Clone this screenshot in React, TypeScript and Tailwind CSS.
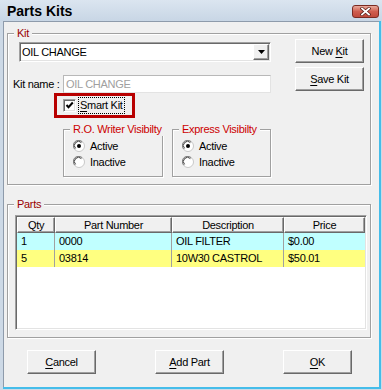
const raised =
  "border border-t-white border-l-white border-r-[#696969] border-b-[#696969] shadow-[inset_-1px_-1px_0_#a0a0a0] bg-[#f0f0f0]";
const sunken =
  "border border-t-[#a0a0a0] border-l-[#a0a0a0] border-r-white border-b-white shadow-[inset_1px_1px_0_#696969,inset_-1px_-1px_0_#e3e3e3]";

const Btn = ({ children, className = "" }: { children: React.ReactNode; className?: string }) => (
  <div className={`flex h-[24px] w-[69px] items-center justify-center ${raised} ${className}`}>
    <span className="leading-none">{children}</span>
  </div>
);

const U = ({ children }: { children: string }) => (
  <span className="underline decoration-1 underline-offset-[2px]">{children}</span>
);

const GroupBox = (props: {
  title: string;
  color: string;
  className?: string;
  children?: React.ReactNode;
}) => (
  <div
    className={`relative border border-[#a0a0a0] shadow-[inset_1px_1px_0_#fff,1px_1px_0_#fff] ${props.className ?? ""}`}
  >
    <span
      className={`absolute -top-[8px] left-[6px] bg-[#f0f0f0] px-[3px] leading-[14px] ${props.color}`}
    >
      {props.title}
    </span>
    {props.children}
  </div>
);

const Radio = ({ checked }: { checked?: boolean }) => (
  <svg width="12" height="12" viewBox="0 0 12 12">
    <circle cx="6" cy="6" r="5.5" fill="#fff" stroke="#c8c8c8" />
    <path d="M1.8 9.2 A5 5 0 0 1 9.2 1.8" fill="none" stroke="#808080" />
    <path d="M2.6 8.4 A4 4 0 0 1 8.4 2.6" fill="none" stroke="#404040" />
    {checked && <circle cx="6" cy="6" r="2" fill="#000" />}
  </svg>
);

const Visibility = ({ title, w }: { title: string; w: string }) => (
  <GroupBox title={title} color="text-[#cc0000]" className={`h-[48px] ${w}`}>
    <div className="flex flex-col pl-[9px] pt-[8px]">
      <div className="flex h-[16px] items-center gap-[5px]">
        <Radio checked />
        <span>Active</span>
      </div>
      <div className="flex h-[16px] items-center gap-[5px]">
        <Radio />
        <span>Inactive</span>
      </div>
    </div>
  </GroupBox>
);

const cols = ["w-[38px]", "w-[117px]", "w-[112px]", "flex-1"];

const rows = [
  { qty: "1", part: "0000", desc: "OIL FILTER", price: "$0.00", bg: "bg-[#c0ffff]" },
  { qty: "5", part: "03814", desc: "10W30 CASTROL", price: "$50.01", bg: "bg-[#ffff80]" },
];

export default function App() {
  return (
    <div className="flex h-[390px] w-[382px] flex-col whitespace-nowrap bg-[#cdd9e6] font-['Liberation_Sans',Arial,sans-serif] text-[11px] tracking-[-0.3px] text-black">
      {/* title bar */}
      <div className="flex h-[21px] items-start bg-gradient-to-b from-[#dbe5f0] to-[#c8d6e5]">
        <span className="ml-[7px] mt-[3px] text-[14px] font-bold leading-[16px] tracking-normal">
          Parts Kits
        </span>
        <div className="ml-auto mr-[3px] mt-[5px] flex h-[13px] w-[27px] items-center justify-center rounded-[3px] border border-[#7a2a22] bg-gradient-to-b from-[#e8a99c] via-[#cf5d4f] to-[#c04a3c]">
          <svg width="11" height="9" viewBox="0 0 11 9">
            <path d="M2 1.5 L9 7.5 M9 1.5 L2 7.5" stroke="#5a1d18" strokeWidth="3.2" strokeLinecap="square" />
            <path d="M2 1.5 L9 7.5 M9 1.5 L2 7.5" stroke="#fff" strokeWidth="1.8" strokeLinecap="square" />
          </svg>
        </div>
      </div>

      <div className="flex flex-1 pb-[1px] pl-[3px] pr-[1px]">
        <div className="flex flex-1 border-b-2 border-r-2 border-[#45bdea]">
          <div className="flex flex-1 flex-col border-l border-t border-[#8e9bab] bg-[#f0f0f0]">
            {/* Kit */}
            <GroupBox title="Kit" color="text-[#990000]" className="ml-[3px] mt-[11px] h-[152px] w-[364px]">
              <div className="flex">
                <div className="flex w-[263px] flex-col">
                  <div className={`ml-[11px] mt-[8px] flex h-[20px] w-[252px] items-center bg-white ${sunken}`}>
                    <span className="flex-1 pl-[2px] pt-[1px]">OIL CHANGE</span>
                    <div className={`mr-[1px] flex h-[16px] w-[16px] items-center justify-center ${raised}`}>
                      <svg width="7" height="4" viewBox="0 0 7 4">
                        <path d="M0 0 H7 L3.5 4 Z" fill="#000" />
                      </svg>
                    </div>
                  </div>
                  <div className="ml-[5px] mt-[13px] flex items-center">
                    <span className="w-[50px]">Kit name :</span>
                    <div className="flex h-[18px] w-[208px] items-center border border-[#b8b8b8] border-b-[#e3e3e3] border-r-[#e3e3e3] bg-white pl-[2px] text-[#a0a0a0]">
                      OIL CHANGE
                    </div>
                  </div>
                  <div className="ml-[46px] flex h-[25px] w-[81px] items-center border-[3px] border-[#b80000] pl-[6px]">
                    <div className={`flex h-[13px] w-[13px] items-center justify-center bg-white ${sunken}`}>
                      <svg width="9" height="9" viewBox="0 0 9 9">
                        <path d="M1.5 4 L3.5 6.2 L7.8 1.5" fill="none" stroke="#000" strokeWidth="2" />
                      </svg>
                    </div>
                    <span className="ml-[2px] border border-dotted border-black px-[1px] leading-[15px]">
                      <U>S</U>mart Kit
                    </span>
                  </div>
                  <div className="ml-[55px] mt-[11px] flex gap-[9px]">
                    <Visibility title="R.O. Writer Visibilty" w="w-[104px]" />
                    <Visibility title="Express Visibilty" w="w-[103px]" />
                  </div>
                </div>
                <div className="ml-[24px] flex flex-col gap-[4px] pt-[5px]">
                  <Btn>
                    New <U>K</U>it
                  </Btn>
                  <Btn>
                    <U>S</U>ave Kit
                  </Btn>
                </div>
              </div>
            </GroupBox>

            {/* Parts */}
            <GroupBox title="Parts" color="text-[#990000]" className="ml-[3px] mt-[19px] h-[134px] w-[364px]">
              <div className={`ml-[7px] mt-[10px] flex h-[115px] w-[352px] flex-col bg-white ${sunken} p-px`}>
                <div className="flex h-[16px]">
                  {["Qty", "Part Number", "Description", "Price"].map((h, i) => (
                    <div
                      key={h}
                      className={`flex items-center justify-center leading-none ${cols[i]} ${raised}`}
                    >
                      {h}
                    </div>
                  ))}
                </div>
                {rows.map((r) => (
                  <div key={r.part} className={`flex h-[17px] ${r.bg}`}>
                    {[r.qty, r.part, r.desc, r.price].map((c, i) => (
                      <div
                        key={i}
                        className={`flex items-center pl-[4px] ${cols[i]} ${i < 3 ? "border-r border-[#a0a0a0]" : ""}`}
                      >
                        {c}
                      </div>
                    ))}
                  </div>
                ))}
              </div>
            </GroupBox>

            {/* buttons */}
            <div className="ml-[23px] mt-[12px] flex gap-[59px]">
              <Btn>
                <U>C</U>ancel
              </Btn>
              <Btn>
                <U>A</U>dd Part
              </Btn>
              <Btn>
                <U>O</U>K
              </Btn>
            </div>
          </div>
        </div>
      </div>
    </div>
  );
}
